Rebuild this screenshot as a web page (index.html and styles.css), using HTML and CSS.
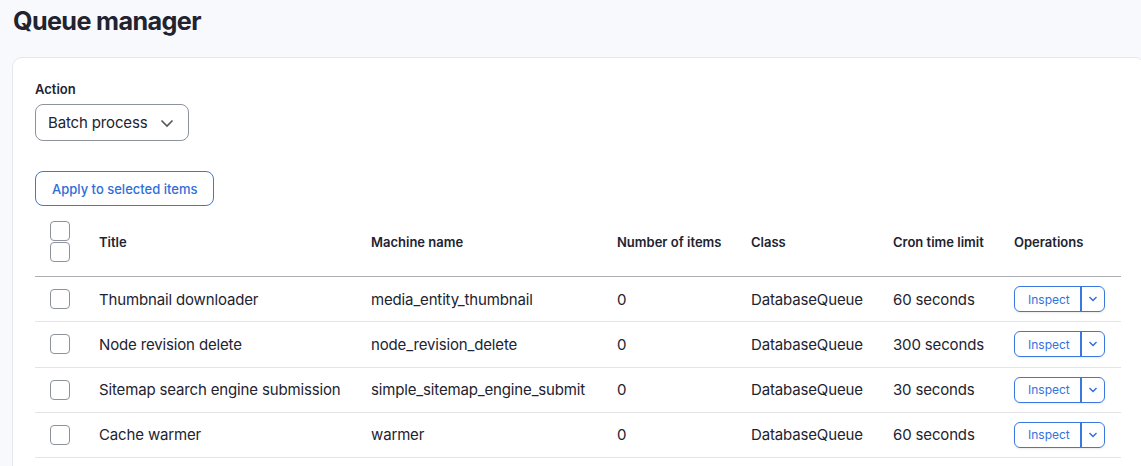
FILE: index.html
```html
<!DOCTYPE html>
<html lang="en">
<head>
<meta charset="utf-8">
<title>Queue manager</title>
<link rel="stylesheet" href="styles.css">
</head>
<body>
<h1 class="page-title">Queue manager</h1>
<div class="card">
  <div class="form-item">
    <label class="form-label">Action</label>
    <div class="select">
      <span>Batch process</span>
      <svg class="select-chevron" width="14" height="9" viewBox="0 0 14 9"><path d="M1.5 1.5 L7 7 L12.5 1.5" fill="none" stroke="#55565b" stroke-width="1.6"/></svg>
    </div>
  </div>
  <button class="btn-apply">Apply to selected items</button>
  <table class="queue-table">
    <colgroup>
      <col class="c-check"><col class="c-title"><col class="c-machine"><col class="c-num"><col class="c-class"><col class="c-cron"><col class="c-ops">
    </colgroup>
    <thead>
      <tr>
        <th class="cell-check"><span class="checkbox"></span><span class="checkbox"></span></th>
        <th>Title</th>
        <th>Machine name</th>
        <th>Number of items</th>
        <th>Class</th>
        <th>Cron time limit</th>
        <th>Operations</th>
      </tr>
    </thead>
    <tbody>
      <tr>
        <td class="cell-check"><span class="checkbox"></span></td>
        <td>Thumbnail downloader</td>
        <td>media_entity_thumbnail</td>
        <td>0</td>
        <td>DatabaseQueue</td>
        <td>60 seconds</td>
        <td><div class="dropbutton"><span class="db-main">Inspect</span><span class="db-toggle"><svg width="10" height="6" viewBox="0 0 10 6"><path d="M1.5 1 L5 4.5 L8.5 1" fill="none" stroke="#2f6ed8" stroke-width="1.4"/></svg></span></div></td>
      </tr>
      <tr>
        <td class="cell-check"><span class="checkbox"></span></td>
        <td>Node revision delete</td>
        <td>node_revision_delete</td>
        <td>0</td>
        <td>DatabaseQueue</td>
        <td>300 seconds</td>
        <td><div class="dropbutton"><span class="db-main">Inspect</span><span class="db-toggle"><svg width="10" height="6" viewBox="0 0 10 6"><path d="M1.5 1 L5 4.5 L8.5 1" fill="none" stroke="#2f6ed8" stroke-width="1.4"/></svg></span></div></td>
      </tr>
      <tr>
        <td class="cell-check"><span class="checkbox"></span></td>
        <td>Sitemap search engine submission</td>
        <td>simple_sitemap_engine_submit</td>
        <td>0</td>
        <td>DatabaseQueue</td>
        <td>30 seconds</td>
        <td><div class="dropbutton"><span class="db-main">Inspect</span><span class="db-toggle"><svg width="10" height="6" viewBox="0 0 10 6"><path d="M1.5 1 L5 4.5 L8.5 1" fill="none" stroke="#2f6ed8" stroke-width="1.4"/></svg></span></div></td>
      </tr>
      <tr>
        <td class="cell-check"><span class="checkbox"></span></td>
        <td>Cache warmer</td>
        <td>warmer</td>
        <td>0</td>
        <td>DatabaseQueue</td>
        <td>60 seconds</td>
        <td><div class="dropbutton"><span class="db-main">Inspect</span><span class="db-toggle"><svg width="10" height="6" viewBox="0 0 10 6"><path d="M1.5 1 L5 4.5 L8.5 1" fill="none" stroke="#2f6ed8" stroke-width="1.4"/></svg></span></div></td>
      </tr>
    </tbody>
  </table>
</div>
</body>
</html>
```

FILE: styles.css
```css
html, body {
  margin: 0;
  padding: 0;
  overflow: hidden;
}
body {
  background: #f8f9fc;
  font-family: Inter, "Noto Sans", sans-serif;
  color: #222330;
  width: 1160px;
}
.page-title {
  margin: 0;
  padding: 3px 0 0 13px;
  height: 57px;
  box-sizing: border-box;
  font-size: 25.2px;
  line-height: 36px;
  font-weight: 700;
  letter-spacing: -0.025em;
  color: #222330;
}
.card {
  margin-left: 12px;
  width: 1133px;
  box-sizing: border-box;
  background: #fff;
  border: 1px solid #e6e7ec;
  border-radius: 10px;
  padding: 22px 24px 40px 22px;
}
.form-item {
  display: flex;
  flex-direction: column;
  align-items: flex-start;
}
.form-label {
  font-size: 13px;
  font-weight: 600;
  line-height: 18px;
  margin-bottom: 6px;
}
.select {
  display: flex;
  align-items: center;
  gap: 13px;
  height: 37px;
  box-sizing: border-box;
  padding: 0 14px 0 12px;
  border: 1px solid #8e929c;
  border-radius: 8px;
  font-size: 15px;
  letter-spacing: -0.15px;
}
.select-chevron {
  margin-top: 1px;
}
.btn-apply {
  display: block;
  margin-top: 30px;
  height: 35px;
  box-sizing: border-box;
  padding: 0 16px;
  background: #fff;
  border: 1px solid #3a78e0;
  border-radius: 8px;
  color: #2f6ed8;
  font-family: Inter, "Noto Sans", sans-serif;
  font-size: 13px;
  font-weight: 500;
}
.queue-table {
  width: 1086px;
  table-layout: fixed;
  border-collapse: collapse;
  margin-top: 1px;
}
.c-check { width: 64px; }
.c-title { width: 272px; }
.c-machine { width: 246px; }
.c-num { width: 134px; }
.c-class { width: 142px; }
.c-cron { width: 121px; }
.c-ops { width: 107px; }
.queue-table th {
  height: 69px;
  padding: 0;
  text-align: left;
  font-size: 13px;
  font-weight: 600;
  border-bottom: 1px solid #adaeb3;
  vertical-align: middle;
}
.queue-table td {
  height: 44.25px;
  padding: 0;
  font-size: 15px;
  letter-spacing: -0.15px;
  border-bottom: 1px solid #e3e4e8;
  vertical-align: middle;
  white-space: nowrap;
}
.cell-check {
  padding-left: 15px !important;
}
th.cell-check {
  line-height: 0;
}
.checkbox {
  display: block;
  width: 20px;
  height: 20px;
  box-sizing: border-box;
  border: 1px solid #8e929c;
  border-radius: 4px;
  background: #fff;
}
th .checkbox + .checkbox {
  margin-top: 1px;
}
.dropbutton {
  display: inline-flex;
  height: 26px;
  box-sizing: border-box;
  border: 1px solid #3a78e0;
  border-radius: 6px;
  color: #3272e0;
  font-size: 12px;
  letter-spacing: 0;
  box-shadow: 0 1px 2px rgba(0,0,0,0.08);
}
.db-main {
  display: flex;
  align-items: center;
  padding: 0 10px 0 13px;
  border-right: 2px solid #3a78e0;
}
.db-toggle {
  display: flex;
  align-items: center;
  justify-content: center;
  width: 22px;
}
```
